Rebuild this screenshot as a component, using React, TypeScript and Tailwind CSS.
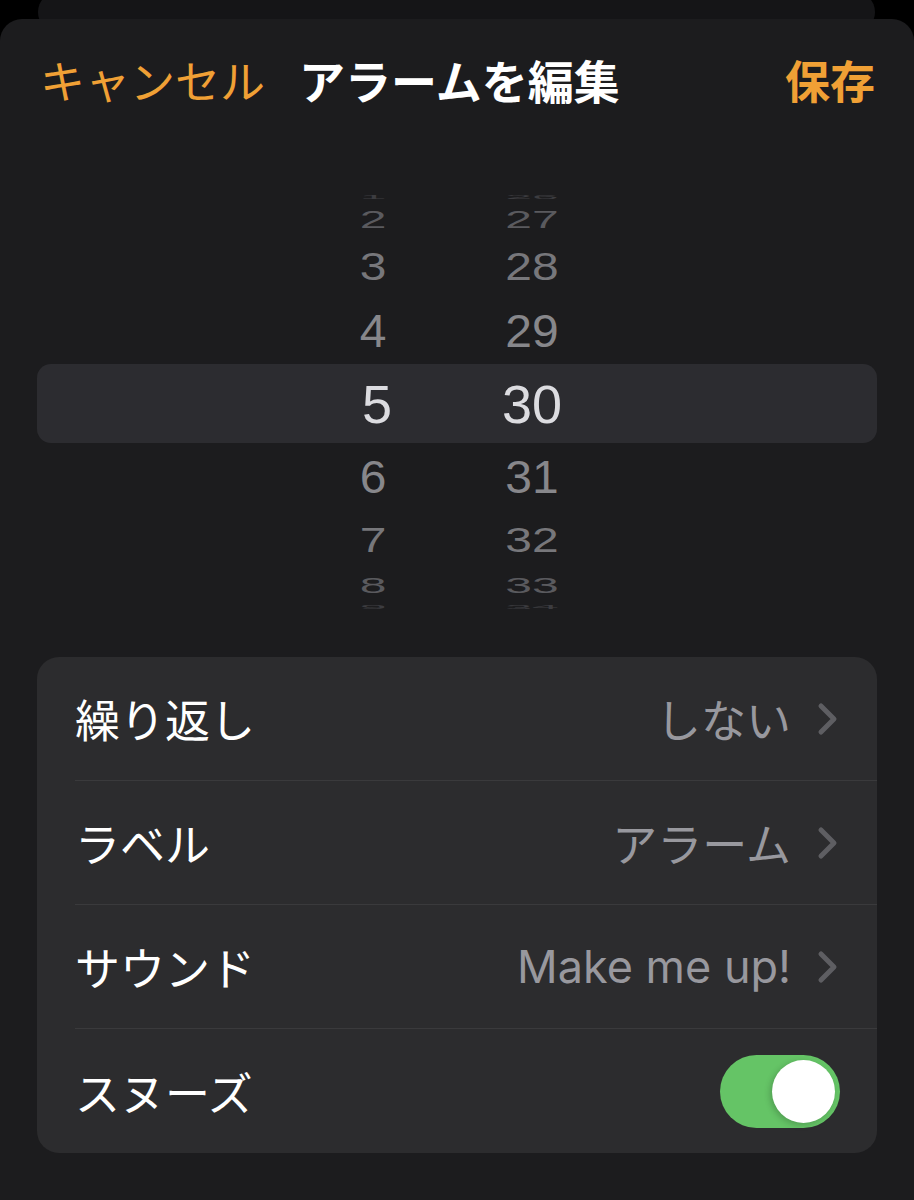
import React from 'react';

const jp = { fontFamily: '"Noto Sans CJK JP", "Noto Sans", sans-serif' };
const num = { fontFamily: '"Liberation Sans", Arial, sans-serif' };
const latin = { fontFamily: 'Inter, "Noto Sans CJK JP", sans-serif' };

type WheelRow = {
  h: string;
  m: string;
  height: string;
  scale: string;
  color: string;
  selected?: boolean;
};

// rows of the time wheel, squashed toward the top and bottom edge
const wheel: WheelRow[] = [
  { h: '1', m: '26', height: 'h-[12px]', scale: 'scale-y-[0.12]', color: 'text-[#3c3c40]' },
  { h: '2', m: '27', height: 'h-[34px]', scale: 'scale-y-[0.5]', color: 'text-[#5a5a5e]' },
  { h: '3', m: '28', height: 'h-[60px]', scale: 'scale-y-[0.79]', color: 'text-[#77777b]' },
  { h: '4', m: '29', height: 'h-[67px]', scale: 'scale-y-[0.98]', color: 'text-[#87878b]' },
  { h: '5', m: '30', height: 'h-[79px]', scale: 'scale-y-100', color: 'text-[#dcdce0]', selected: true },
  { h: '6', m: '31', height: 'h-[68px]', scale: 'scale-y-[0.97]', color: 'text-[#87878b]' },
  { h: '7', m: '32', height: 'h-[58px]', scale: 'scale-y-[0.74]', color: 'text-[#77777b]' },
  { h: '8', m: '33', height: 'h-[32px]', scale: 'scale-y-[0.47]', color: 'text-[#5a5a5e]' },
  { h: '9', m: '34', height: 'h-[12px]', scale: 'scale-y-[0.12]', color: 'text-[#3c3c40]' },
];

const Chevron = () => (
  <svg width="22" height="34" viewBox="0 0 22 34" fill="none">
    <path d="M4 4 L17 17 L4 30" stroke="#5e5e62" strokeWidth="5" strokeLinecap="round" strokeLinejoin="round" />
  </svg>
);

const SettingRow = ({
  label,
  value,
  latinValue,
  last,
  children,
}: {
  label: string;
  value?: string;
  latinValue?: boolean;
  last?: boolean;
  children?: React.ReactNode;
}) => (
  <div className="pl-[38px]">
    <div className={`h-[124px] flex items-center ${last ? '' : 'border-b border-[#3a3a3c]'}`}>
      <span className="text-[45px] leading-none text-white" style={jp}>{label}</span>
      <div className="flex-1" />
      {value !== undefined && (
        <div className="flex items-center gap-[26px] pr-[38px]">
          <span className="text-[45px] leading-none text-[#98989e]" style={latinValue ? latin : jp}>{value}</span>
          <Chevron />
        </div>
      )}
      {children}
    </div>
  </div>
);

export default function App() {
  return (
    <div className="w-[914px] h-[1200px] bg-black overflow-hidden">
      {/* sheet behind */}
      <div className="h-[19px] overflow-hidden">
        <div className="h-[40px] -mt-[8px] ml-[38px] mr-[39px] rounded-[20px] bg-[#151517]" />
      </div>

      <div className="h-[1181px] bg-[#1c1c1e] rounded-t-[22px]">
        {/* header */}
        <div className="h-[120px] flex items-center pl-[40px] pr-[39px]">
          <span className="text-[45px] leading-none text-[#f0a035]" style={jp}>キャンセル</span>
          <span className="ml-[34px] text-[46px] leading-none font-bold text-white" style={jp}>アラームを編集</span>
          <div className="flex-1" />
          <span className="text-[45px] leading-none font-bold text-[#f0a035]" style={jp}>保存</span>
        </div>

        {/* time picker */}
        <div className="mt-[52px] mx-[37px] flex flex-col">
          {wheel.map((r) => (
            <div
              key={r.h}
              className={`${r.height} flex items-center ${r.selected ? 'bg-[#2c2c30] rounded-[14px]' : ''}`}
            >
              <div className="w-[286px]" />
              <div className={`w-[100px] flex justify-center ${r.color} ${r.scale}`} style={num}>
                <span className={r.selected ? 'text-[54px] leading-none pl-[8px]' : 'text-[48px] leading-none'}>{r.h}</span>
              </div>
              <div className="w-[59px]" />
              <div className={`w-[100px] flex justify-center ${r.color} ${r.scale}`} style={num}>
                <span className={r.selected ? 'text-[54px] leading-none' : 'text-[48px] leading-none'}>{r.m}</span>
              </div>
            </div>
          ))}
        </div>

        {/* settings */}
        <div className="mt-[44px] mx-[37px] bg-[#2c2c2e] rounded-[22px] overflow-hidden">
          <SettingRow label="繰り返し" value="しない" />
          <SettingRow label="ラベル" value="アラーム" />
          <SettingRow label="サウンド" value="Make me up!" latinValue />
          <SettingRow label="スヌーズ" last>
            <div className="mr-[37px] w-[120px] h-[73px] rounded-full bg-[#65c466] flex items-center justify-end pr-[5px]">
              <div className="w-[63px] h-[63px] rounded-full bg-white shadow-[-2px_2px_6px_rgba(0,0,0,0.2)]" />
            </div>
          </SettingRow>
        </div>
      </div>
    </div>
  );
}
